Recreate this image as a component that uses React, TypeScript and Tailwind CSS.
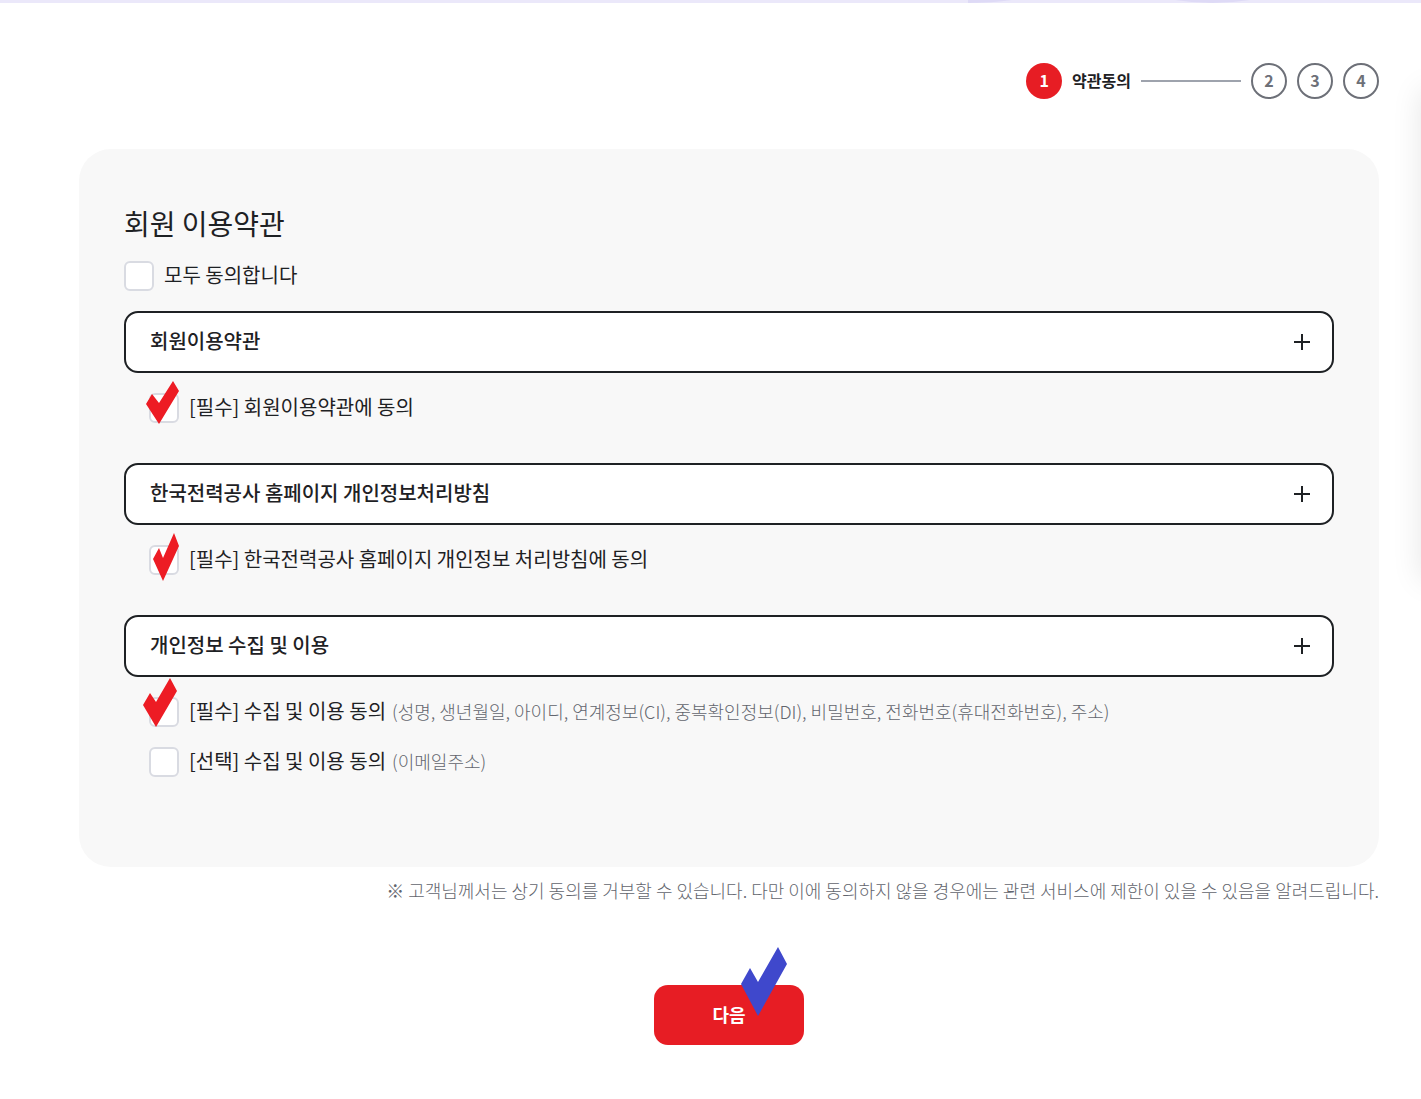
import { useState } from "react";

interface Consent {
  id: string;
  label: string;
  detail?: string;
  mark?: { className: string; viewBox: string; points: string };
}

interface Term {
  title: string;
  consents: Consent[];
}

const TERMS: Term[] = [
  {
    title: "회원이용약관",
    consents: [
      {
        id: "member",
        label: "[필수] 회원이용약관에 동의",
        mark: {
          className: "-left-[3px] -top-3 w-[33px] h-[43px]",
          viewBox: "0 0 33 43",
          points: "6,13 13,22 27,0 33,10 13,43 0,23",
        },
      },
    ],
  },
  {
    title: "한국전력공사 홈페이지 개인정보처리방침",
    consents: [
      {
        id: "privacy",
        label: "[필수] 한국전력공사 홈페이지 개인정보 처리방침에 동의",
        mark: {
          className: "left-1 -top-3 w-[26px] h-[48px]",
          viewBox: "0 0 26 48",
          points: "6,15 10,25 21,0 26,13 10,48 0,26",
        },
      },
    ],
  },
  {
    title: "개인정보 수집 및 이용",
    consents: [
      {
        id: "collect",
        label: "[필수] 수집 및 이용 동의",
        detail:
          "(성명, 생년월일, 아이디, 연계정보(CI), 중복확인정보(DI), 비밀번호, 전화번호(휴대전화번호), 주소)",
        mark: {
          className: "-left-[6px] -top-[19px] w-[34px] h-[49px]",
          viewBox: "0 0 34 49",
          points: "7,15 13,24 27,0 34,13 13,49 0,27",
        },
      },
      {
        id: "email",
        label: "[선택] 수집 및 이용 동의",
        detail: "(이메일주소)",
      },
    ],
  },
];

const CHECKBOX =
  "block size-[30px] shrink-0 appearance-none rounded-md border-2 border-[#d9dbe2] bg-white checked:bg-[#e71d24]";

function Stepper() {
  return (
    <ol className="flex items-center justify-end gap-[10px] text-base font-bold">
      <li className="flex items-center gap-[10px]">
        <span className="flex size-9 items-center justify-center rounded-full bg-[#e71d24] pb-0.5 text-white">
          1
        </span>
        <span className="pb-0.5 text-[#1e2124]">약관동의</span>
        <span className="h-[2px] w-[100px] bg-[#9ea3ad]" />
      </li>
      {[2, 3, 4].map((step) => (
        <li
          key={step}
          className="flex size-9 items-center justify-center rounded-full border-2 border-[#6d7078] pb-0.5 text-[#6d7078]"
        >
          {step}
        </li>
      ))}
    </ol>
  );
}

function ConsentRow({ consent }: { consent: Consent }) {
  return (
    <div className="flex items-center gap-[10px]">
      <div className="relative shrink-0">
        <input id={consent.id} type="checkbox" className={CHECKBOX} />
        {consent.mark && (
          <svg
            className={`pointer-events-none absolute ${consent.mark.className}`}
            viewBox={consent.mark.viewBox}
          >
            <polygon points={consent.mark.points} fill="#ed1c24" />
          </svg>
        )}
      </div>
      <label htmlFor={consent.id} className="pb-0.5 text-xl leading-7">
        {consent.label}
        {consent.detail && (
          <span className="ml-[6px] text-lg leading-7 font-light text-[#62656d]">
            {consent.detail}
          </span>
        )}
      </label>
    </div>
  );
}

function TermSection({ term }: { term: Term }) {
  const [open, setOpen] = useState(false);

  return (
    <section>
      <button
        type="button"
        aria-expanded={open}
        onClick={() => setOpen(!open)}
        className="flex h-[62px] w-full items-center justify-between rounded-[14px] border-2 border-[#1e2124] bg-white pr-[22px] pl-6 text-left text-xl font-medium"
      >
        <span className="pb-0.5">{term.title}</span>
        <svg className="size-4" viewBox="0 0 16 16" stroke="#1e2124" strokeWidth="2">
          <path d="M0 8H16M8 0V16" />
        </svg>
      </button>
      <div className="flex flex-col gap-5 pt-5 pl-[25px]">
        {term.consents.map((consent) => (
          <ConsentRow key={consent.id} consent={consent} />
        ))}
      </div>
    </section>
  );
}

export default function App() {
  return (
    <div className="relative min-h-screen overflow-hidden bg-white font-['Noto_Sans_CJK_KR',sans-serif] text-[#1e2124]">
      {/* 상단 배너 */}
      <svg className="block h-[3px] w-full" viewBox="0 0 1421 3" preserveAspectRatio="none">
        <rect width="1421" height="3" fill="#ebe8fa" />
        <path d="M968 0H1012Q992 3 968 3ZM1175 0H1250Q1212 6 1175 0Z" fill="#dedaf6" />
      </svg>

      {/* 우측 퀵메뉴 */}
      <aside className="absolute top-[90px] left-full h-[490px] w-20 bg-white shadow-[0_0_30px_rgba(0,0,0,0.1)]" />

      <main className="pt-[60px] pr-[42px] pb-[54px] pl-[79px]">
        <Stepper />

        <div className="mt-[50px] rounded-[32px] bg-[#f8f8f8] px-[45px] pt-[53px] pb-[90px]">
          <h1 className="text-[28px] leading-[42px]">회원 이용약관</h1>
          <div className="mt-[17px] flex items-center gap-[10px]">
            <input id="all" type="checkbox" className={CHECKBOX} />
            <label htmlFor="all" className="pb-0.5 text-xl leading-7">
              모두 동의합니다
            </label>
          </div>
          <div className="mt-5 flex flex-col gap-10">
            {TERMS.map((term) => (
              <TermSection key={term.title} term={term} />
            ))}
          </div>
        </div>

        <p className="mt-[9px] text-right text-lg leading-7 font-light text-[#62656d]">
          ※ 고객님께서는 상기 동의를 거부할 수 있습니다. 다만 이에 동의하지 않을 경우에는 관련
          서비스에 제한이 있을 수 있음을 알려드립니다.
        </p>

        <div className="mt-[81px] flex justify-center">
          <div className="relative">
            <button
              type="button"
              className="block h-[60px] w-[150px] rounded-[14px] bg-[#e71d24] pb-0.5 text-lg font-bold text-white"
            >
              다음
            </button>
            <svg
              className="pointer-events-none absolute -top-[38px] left-[87px] h-[69px] w-[46px]"
              viewBox="0 0 46 69"
            >
              <polygon points="9,21 17,35 37,0 46,17 17,69 0,37" fill="#3f48cc" />
            </svg>
          </div>
        </div>
      </main>
    </div>
  );
}
